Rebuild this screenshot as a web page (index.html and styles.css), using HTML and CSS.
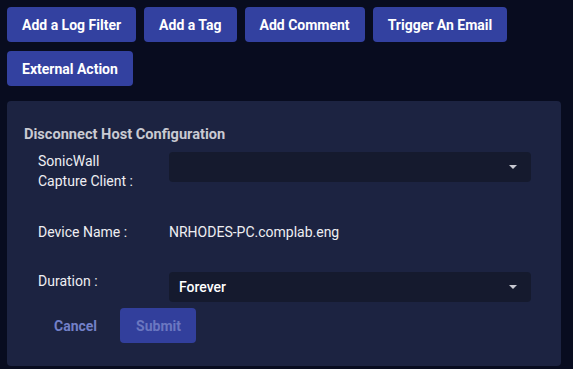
FILE: index.html
```html
<!DOCTYPE html>
<html>
<head>
<meta charset="utf-8">
<link rel="stylesheet" href="styles.css">
</head>
<body>
<div class="actions">
  <button class="btn">Add a Log Filter</button>
  <button class="btn">Add a Tag</button>
  <button class="btn">Add Comment</button>
  <button class="btn">Trigger An Email</button>
  <button class="btn">External Action</button>
</div>
<div class="panel">
  <div class="title">Disconnect Host Configuration</div>
  <div class="row row-first">
    <div class="label">SonicWall<br>Capture Client :</div>
    <div class="select"><span class="value"></span><span class="caret"></span></div>
  </div>
  <div class="row row-device">
    <div class="label">Device Name :</div>
    <div class="text">NRHODES-PC.complab.eng</div>
  </div>
  <div class="row row-duration">
    <div class="label">Duration :</div>
    <div class="select"><span class="value">Forever</span><span class="caret"></span></div>
  </div>
  <div class="form-actions">
    <button class="link">Cancel</button>
    <button class="submit" disabled>Submit</button>
  </div>
</div>
</body>
</html>
```
FILE: styles.css
```css
html, body {
  margin: 0;
  background: #080c1f;
}
body {
  padding: 7px;
  font-family: Roboto, "Liberation Sans", sans-serif;
  width: 554px;
}
.actions {
  display: flex;
  flex-wrap: wrap;
  gap: 9px 8px;
  width: 520px;
}
.btn {
  height: 35px;
  padding: 0 15px;
  border: 0;
  border-radius: 4px;
  background: #3341a0;
  color: #fff;
  font-family: Roboto, sans-serif;
  font-weight: 700;
  font-size: 14px;
}
.panel {
  margin-top: 15px;
  height: 265px;
  box-sizing: border-box;
  background: #1c2341;
  border-radius: 4px;
  padding: 25px 30px 0 17px;
}
.title {
  font-weight: 700;
  font-size: 14.6px;
  line-height: 17px;
  color: #c9cad2;
  margin-bottom: 8px;
}
.row {
  display: flex;
  align-items: flex-start;
  padding-left: 14px;
}
.label {
  width: 131px;
  flex: none;
  font-family: Roboto, sans-serif;
  font-size: 14px;
  line-height: 20px;
  color: #eeeef2;
}
.text {
  font-family: Roboto, sans-serif;
  font-size: 14px;
  line-height: 20px;
  color: #eeeef2;
}
.select {
  flex: 1;
  height: 30px;
  margin-top: 1px;
  background: #151a2e;
  border-radius: 4px;
  display: flex;
  align-items: center;
  justify-content: space-between;
  padding: 0 14px 0 10px;
}
.value {
  font-family: Roboto, sans-serif;
  font-size: 14px;
  color: #fff;
  font-weight: 500;
}
.caret {
  width: 0;
  height: 0;
  border-left: 4px solid transparent;
  border-right: 4px solid transparent;
  border-top: 4px solid #c8c9d2;
}
.row-device {
  margin-top: 31px;
}
.row-duration {
  margin-top: 29px;
}
.form-actions {
  display: flex;
  gap: 8px;
  padding-left: 14px;
  margin-top: 6px;
}
.link, .submit {
  height: 35px;
  border: 0;
  border-radius: 4px;
  font-family: Roboto, sans-serif;
  font-weight: 700;
  font-size: 14px;
  padding: 0 15px 0 16px;
}
.link {
  background: transparent;
  color: #7380c8;
}
.submit {
  background: #323f9c;
  color: #6b77c1;
}
```
